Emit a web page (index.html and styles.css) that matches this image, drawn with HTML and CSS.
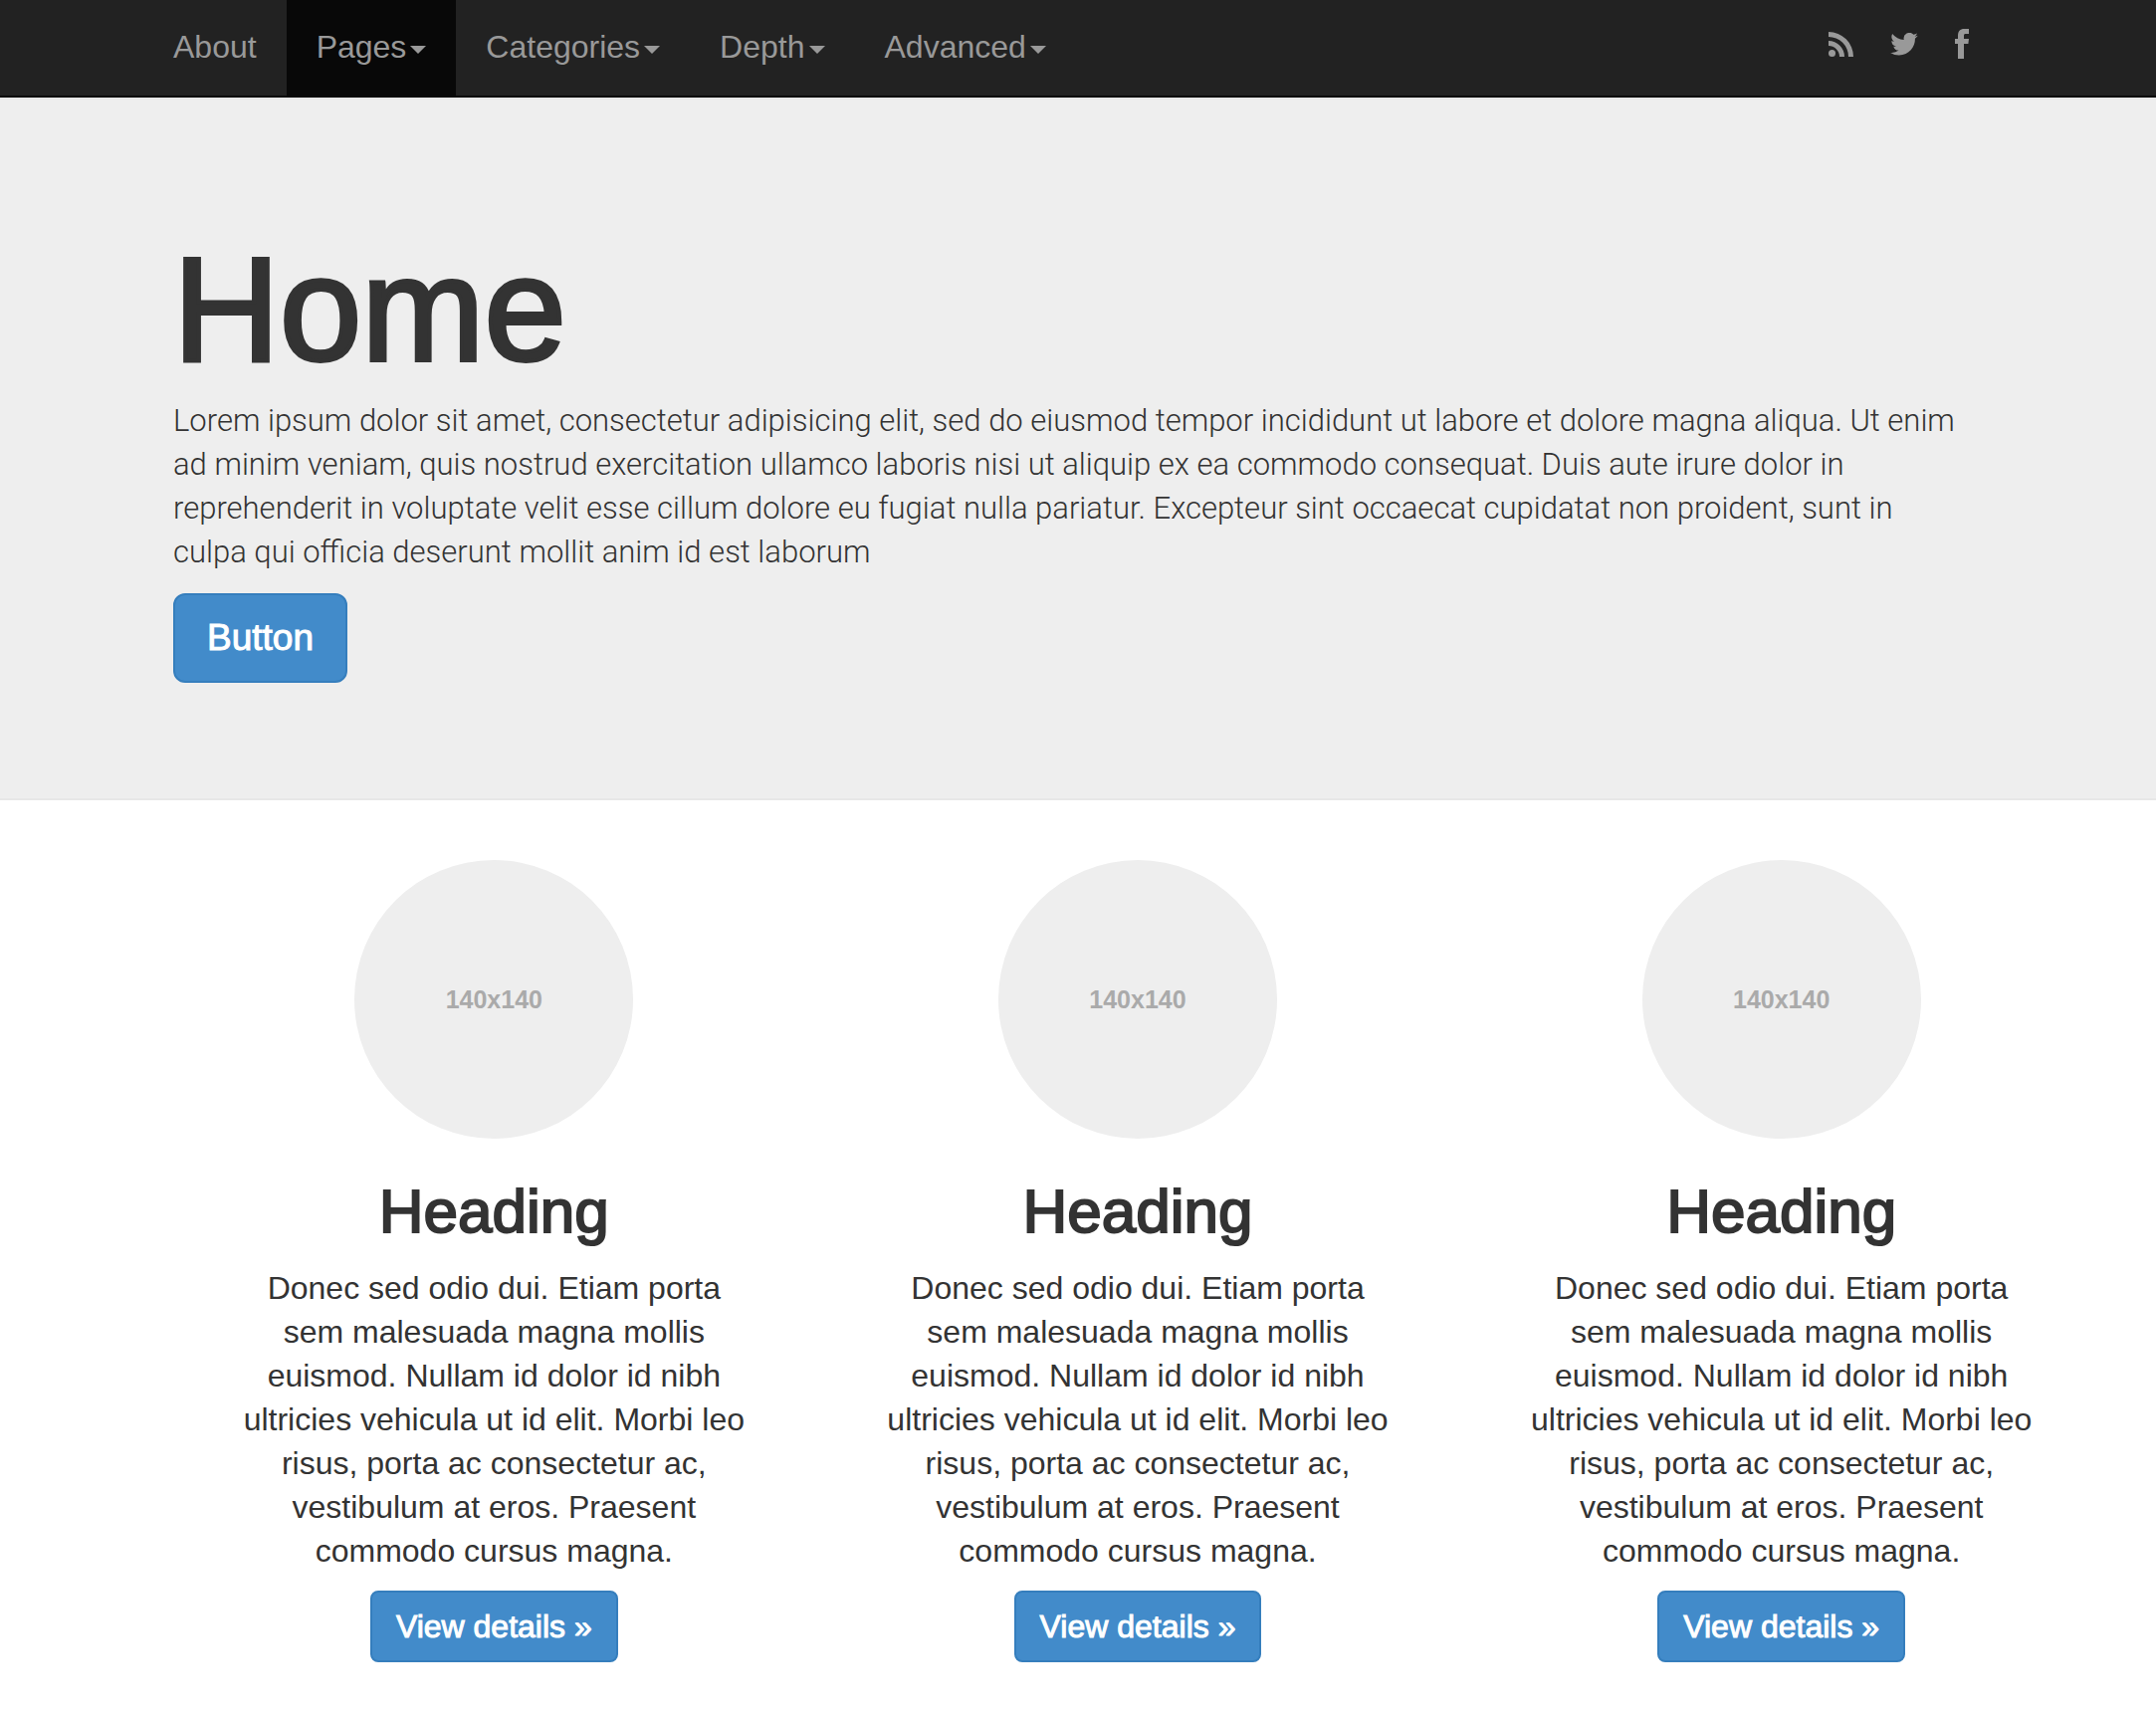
FILE: index.html
```html
<!DOCTYPE html>
<html lang="en">
<head>
<meta charset="utf-8">
<meta name="viewport" content="width=device-width, initial-scale=1">
<title>Home</title>
<link rel="stylesheet" href="styles.css">
</head>
<body>
<header class="navbar">
  <nav class="nav" aria-label="Main">
    <a class="nav-item" href="#about">About</a>
    <button class="nav-item active" type="button" aria-haspopup="true">Pages<span class="caret"></span></button>
    <button class="nav-item" type="button" aria-haspopup="true">Categories<span class="caret"></span></button>
    <button class="nav-item" type="button" aria-haspopup="true">Depth<span class="caret"></span></button>
    <button class="nav-item" type="button" aria-haspopup="true">Advanced<span class="caret"></span></button>
  </nav>
  <div class="social">
    <a href="#rss" aria-label="RSS"><svg width="25" height="25" viewBox="0 0 25 25"><circle cx="3.5" cy="21.5" r="3.5"/><path d="M0 9v5a11 11 0 0 1 11 11h5A16 16 0 0 0 0 9zM0 0v5a20 20 0 0 1 20 20h5A25 25 0 0 0 0 0z"/></svg></a>
    <a href="#twitter" aria-label="Twitter"><svg width="28" height="23" viewBox="0 0 24 20"><path d="M24 2.4a9.8 9.8 0 0 1-2.8.8A4.9 4.9 0 0 0 23.3.4a9.9 9.9 0 0 1-3.1 1.2 4.9 4.9 0 0 0-8.4 4.5A14 14 0 0 1 1.7.9a4.900 4.900 0 0 0 1.500 6.600 4.900 4.900 0 0 1-2.200-.6v.1a4.900 4.900 0 0 0 3.900 4.800 4.900 4.900 0 0 1-2.200.1 4.900 4.900 0 0 0 4.600 3.400A9.900 9.900 0 0 1 0 17.300 14 14 0 0 0 7.500 19.500c9.100 0 14.300-7.700 14-14.600A10 10 0 0 0 24 2.400z"/></svg></a>
    <a href="#facebook" aria-label="Facebook"><svg width="14" height="30" viewBox="0 0 14 30"><path d="M3 30V15H0v-5h3V7c0-4.500 2-7 6.500-7H14v5h-3C9.400 5 9 5.600 9 7v3h5l-.6 5H9v15z"/></svg></a>
  </div>
</header>
<main>
  <section class="jumbotron">
    <h1>Home</h1>
    <p>Lorem ipsum dolor sit amet, consectetur adipisicing elit, sed do eiusmod tempor incididunt ut labore et dolore magna aliqua. Ut enim ad minim veniam, quis nostrud exercitation ullamco laboris nisi ut aliquip ex ea commodo consequat. Duis aute irure dolor in reprehenderit in voluptate velit esse cillum dolore eu fugiat nulla pariatur. Excepteur sint occaecat cupidatat non proident, sunt in culpa qui officia deserunt mollit anim id est laborum</p>
    <button class="btn btn-large" type="button">Button</button>
  </section>
  <section class="features">
    <article class="feature">
      <div class="placeholder">140x140</div>
      <h2>Heading</h2>
      <p>Donec sed odio dui. Etiam porta sem malesuada magna mollis euismod. Nullam id dolor id nibh ultricies vehicula ut id elit. Morbi leo risus, porta ac consectetur ac, vestibulum at eros. Praesent commodo cursus magna.</p>
      <a class="btn" href="#details-1">View details »</a>
    </article>
    <article class="feature">
      <div class="placeholder">140x140</div>
      <h2>Heading</h2>
      <p>Donec sed odio dui. Etiam porta sem malesuada magna mollis euismod. Nullam id dolor id nibh ultricies vehicula ut id elit. Morbi leo risus, porta ac consectetur ac, vestibulum at eros. Praesent commodo cursus magna.</p>
      <a class="btn" href="#details-2">View details »</a>
    </article>
    <article class="feature">
      <div class="placeholder">140x140</div>
      <h2>Heading</h2>
      <p>Donec sed odio dui. Etiam porta sem malesuada magna mollis euismod. Nullam id dolor id nibh ultricies vehicula ut id elit. Morbi leo risus, porta ac consectetur ac, vestibulum at eros. Praesent commodo cursus magna.</p>
      <a class="btn" href="#details-3">View details »</a>
    </article>
  </section>
</main>
</body>
</html>
```
FILE: styles.css
```css
* {
  box-sizing: border-box;
}

body {
  margin: 0;
  background: #fff;
  color: #333;
  font: 32px/44px "Helvetica Neue", Helvetica, "Liberation Sans", Arial, sans-serif;
}

h1, h2, p {
  margin: 0;
}

/* Medium weight: regular letters thickened by an outline */
h1, h2 {
  font-weight: normal;
}

/* Top navigation */
.navbar {
  display: flex;
  justify-content: space-between;
  padding: 0 188px 0 144px;
  background: #222;
  border-bottom: 2px solid #080808;
}

.nav {
  display: flex;
}

.nav-item {
  display: flex;
  align-items: center;
  gap: 4px;
  height: 96px;
  padding: 0 30px 2px;
  border: 0;
  background: none;
  color: #999;
  font: inherit;
  text-decoration: none;
  cursor: pointer;
}

.nav-item.active {
  background: #080808;
}

.caret {
  margin-top: 6px;
  border: 8px solid transparent;
  border-top-color: #999;
  border-bottom: 0;
}

.social {
  display: flex;
  align-items: center;
  gap: 37px;
  padding-bottom: 8px;
}

.social a {
  display: flex;
}

.social svg {
  fill: #999;
}

/* Hero */
.jumbotron {
  padding: 132px 188px 116px 174px;
  background: #eee;
  border-top: 2px solid #e7e7e7;
  border-bottom: 2px solid #e7e7e7;
}

.jumbotron h1 {
  margin-bottom: 11px;
  font-size: 148px;
  line-height: 158px;
  -webkit-text-stroke: 4px #333;
}

.jumbotron p {
  margin-bottom: 19px;
  font-family: Roboto, "Helvetica Neue", "Liberation Sans", sans-serif;
  font-size: 31px;
  font-weight: 300;
}

.btn {
  display: inline-block;
  padding: 12px 24px;
  border: 2px solid #357ebd;
  border-radius: 8px;
  background: #428bca;
  color: #fff;
  font: inherit;
  text-decoration: none;
  cursor: pointer;
  -webkit-text-stroke: 1px #fff;
}

.btn-large {
  display: block;
  padding: 21px 32px;
  border-radius: 12px;
  font-size: 37px;
}

/* Three columns */
.features {
  display: grid;
  grid-template-columns: repeat(3, 1fr);
  padding: 60px 53px 52px 173px;
}

.feature {
  padding: 0 62px;
  text-align: center;
}

.placeholder {
  display: flex;
  align-items: center;
  justify-content: center;
  width: 280px;
  height: 280px;
  margin: 0 auto 40px;
  border-radius: 50%;
  background: #eee;
  color: #aaa;
  font-size: 25px;
  font-weight: bold;
}

.feature h2 {
  margin-bottom: 22px;
  font-size: 62px;
  line-height: 66px;
  -webkit-text-stroke: 2px #333;
}

.feature p {
  margin-bottom: 18px;
}
```
